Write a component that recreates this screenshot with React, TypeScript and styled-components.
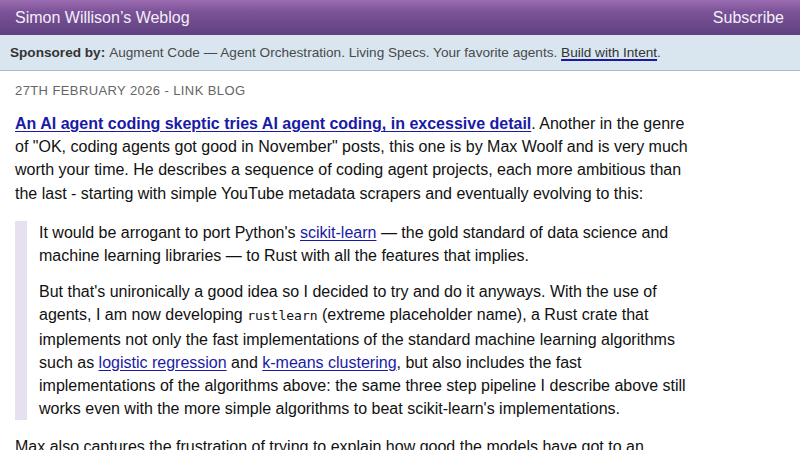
import React from "react";
import styled, { createGlobalStyle } from "styled-components";

const Global = createGlobalStyle`
  html, body { margin: 0; padding: 0; background: #fff; }
  body { font-family: "Liberation Sans", Helvetica, Arial, sans-serif; color: #111; }
`;

const Header = styled.header`
  height: 35px;
  display: flex;
  align-items: center;
  justify-content: space-between;
  padding: 0 16px 0 15px;
  background: linear-gradient(to bottom, #9c6bb0 0%, #7a5297 35%, #5f4180 100%);
  color: #f4eef8;
  font-size: 16px;
`;

const HeaderLink = styled.a`
  color: #f4eef8;
  text-decoration: none;
`;

const SponsorBar = styled.div`
  height: 35px;
  display: flex;
  align-items: center;
  padding: 0 10px;
  background: #d9e6f0;
  border-bottom: 1px solid #a9bccd;
  color: #4a4a4a;
  font-size: 13.6px;
`;

const SponsorLabel = styled.strong`
  color: #333;
  margin-right: 4px;
`;

const SponsorLink = styled.a`
  color: #333;
  text-decoration: underline;
  text-decoration-color: #1a1a9a;
  text-decoration-thickness: 2px;
  text-underline-offset: 2px;
`;

const Main = styled.main`
  padding: 0 15px;
  width: 680px;
`;

const DateLine = styled.div`
  margin-top: 11px;
  font-size: 13px;
  line-height: 18px;
  letter-spacing: 0.4px;
  text-transform: uppercase;
  color: #666;
`;

const Para = styled.p<{ $top?: number; $bottom?: number }>`
  margin: ${(p) => p.$top ?? 0}px 0 ${(p) => p.$bottom ?? 0}px;
  font-size: 16px;
  line-height: 23.2px;
`;

const TitleLink = styled.a`
  color: #1a1aa6;
  font-weight: bold;
  text-decoration: underline;
  text-underline-offset: 2px;
`;

const Link = styled.a`
  color: #1a1aa6;
  text-decoration: underline;
  text-underline-offset: 2px;
`;

const Quote = styled.blockquote`
  margin: 16px 0 0;
  padding-left: 12px;
  border-left: 12px solid #e7e0ef;
`;

const Code = styled.code`
  font-family: "DejaVu Sans Mono", "Liberation Mono", monospace;
  font-size: 13px;
`;

export default function App() {
  return (
    <>
      <Global />
      <Header>
        <HeaderLink href="#">Simon Willison’s Weblog</HeaderLink>
        <HeaderLink href="#">Subscribe</HeaderLink>
      </Header>
      <SponsorBar>
        <SponsorLabel>Sponsored by:</SponsorLabel>
        <span>
          Augment Code — Agent Orchestration. Living Specs. Your favorite agents.{" "}
          <SponsorLink href="#">Build with Intent</SponsorLink>.
        </span>
      </SponsorBar>
      <Main>
        <DateLine>27th February 2026 - Link Blog</DateLine>
        <Para $top={12}>
          <TitleLink href="#">An AI agent coding skeptic tries AI agent coding, in excessive detail</TitleLink>.
          Another in the genre of "OK, coding agents got good in November" posts, this one is by Max Woolf
          and is very much worth your time. He describes a sequence of coding agent projects, each more
          ambitious than the last - starting with simple YouTube metadata scrapers and eventually evolving
          to this:
        </Para>
        <Quote>
          <Para>
            It would be arrogant to port Python's <Link href="#">scikit-learn</Link> — the gold standard of
            data science and machine learning libraries — to Rust with all the features that implies.
          </Para>
          <Para $top={13}>
            But that's unironically a good idea so I decided to try and do it anyways. With the use of
            agents, I am now developing <Code>rustlearn</Code> (extreme placeholder name), a Rust crate that
            implements not only the fast implementations of the standard machine learning algorithms such as{" "}
            <Link href="#">logistic regression</Link> and <Link href="#">k-means clustering</Link>, but also
            includes the fast implementations of the algorithms above: the same three step pipeline I
            describe above still works even with the more simple algorithms to beat scikit-learn's
            implementations.
          </Para>
        </Quote>
        <Para $top={15}>
          Max also captures the frustration of trying to explain how good the models have got to an
          audience that hasn't tried them yet.
        </Para>
      </Main>
    </>
  );
}
